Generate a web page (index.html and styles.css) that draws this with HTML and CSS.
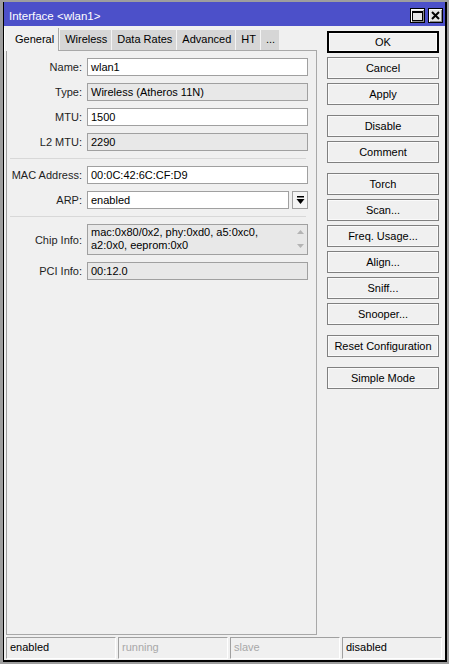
FILE: index.html
```html
<!DOCTYPE html>
<html lang="en">
<head>
    <meta charset="UTF-8">
    <title>Interface &lt;wlan1&gt;</title>
    <link rel="stylesheet" href="styles.css">
</head>
<body>
    <div class="window">
        <div class="titlebar">
            <span class="title">Interface &lt;wlan1&gt;</span>
            <div class="title-buttons">
                <span class="tbtn">
                    <svg width="11" height="10" viewBox="0 0 11 10"><rect x="0.5" y="0.5" width="10" height="9" fill="none" stroke="#000"/><rect x="0" y="0" width="11" height="2" fill="#000"/></svg>
                </span>
                <span class="tbtn">
                    <svg width="9" height="9" viewBox="0 0 9 9"><path d="M1 1 L8 8 M8 1 L1 8" stroke="#000" stroke-width="2"/></svg>
                </span>
            </div>
        </div>

        <div class="window-body">
            <div class="main">
                <div class="tabs">
                    <div class="tab active">General</div>
                    <div class="tab">Wireless</div>
                    <div class="tab">Data Rates</div>
                    <div class="tab">Advanced</div>
                    <div class="tab">HT</div>
                    <div class="tab">...</div>
                </div>
                <div class="panel">
                    <div class="row">
                        <label>Name:</label>
                        <div class="field">wlan1</div>
                    </div>
                    <div class="row">
                        <label>Type:</label>
                        <div class="field readonly">Wireless (Atheros 11N)</div>
                    </div>
                    <div class="row">
                        <label>MTU:</label>
                        <div class="field">1500</div>
                    </div>
                    <div class="row">
                        <label>L2 MTU:</label>
                        <div class="field readonly">2290</div>
                    </div>

                    <div class="separator"></div>

                    <div class="row">
                        <label>MAC Address:</label>
                        <div class="field">00:0C:42:6C:CF:D9</div>
                    </div>
                    <div class="row">
                        <label>ARP:</label>
                        <div class="field">enabled</div>
                        <span class="drop">
                            <svg width="9" height="9" viewBox="0 0 9 9"><rect x="1" y="0" width="7" height="1.5" fill="#000"/><path d="M0.5 3 L8.5 3 L4.5 8 Z" fill="#000"/></svg>
                        </span>
                    </div>

                    <div class="separator"></div>

                    <div class="row tall">
                        <label>Chip Info:</label>
                        <div class="field readonly multi">
                            <div>mac:0x80/0x2, phy:0xd0, a5:0xc0,<br>a2:0x0, eeprom:0x0</div>
                            <div class="scroll">
                                <svg width="7" height="4" viewBox="0 0 7 4"><path d="M0 4 L3.5 0 L7 4 Z" fill="#b4b4b4"/></svg>
                                <svg width="7" height="4" viewBox="0 0 7 4"><path d="M0 0 L7 0 L3.5 4 Z" fill="#b4b4b4"/></svg>
                            </div>
                        </div>
                    </div>
                    <div class="row">
                        <label>PCI Info:</label>
                        <div class="field readonly">00:12.0</div>
                    </div>
                </div>
            </div>

            <div class="actions">
                <button class="default">OK</button>
                <button>Cancel</button>
                <button>Apply</button>
                <button class="group">Disable</button>
                <button>Comment</button>
                <button class="group">Torch</button>
                <button>Scan...</button>
                <button>Freq. Usage...</button>
                <button>Align...</button>
                <button>Sniff...</button>
                <button>Snooper...</button>
                <button class="group">Reset Configuration</button>
                <button class="group">Simple Mode</button>
            </div>
        </div>

        <div class="statusbar">
            <div class="cell">enabled</div>
            <div class="cell off">running</div>
            <div class="cell off">slave</div>
            <div class="cell last">disabled</div>
        </div>
    </div>
</body>
</html>
```

FILE: styles.css
```css
body {
    margin: 0;
    padding: 2px 2px 2px 3px;
    height: 664px;
    box-sizing: border-box;
    background-color: #9e9e9e;
    font-family: "Liberation Sans", Arial, sans-serif;
    font-size: 11px;
    color: #000;
}

.window {
    height: 660px;
    box-sizing: border-box;
    display: flex;
    flex-direction: column;
    background-color: #f0f0f0;
    border-left: 1px solid #000;
    border-right: 2px solid #000;
    border-bottom: 2px solid #000;
}

/* title bar */
.titlebar {
    height: 24px;
    flex-shrink: 0;
    display: flex;
    justify-content: space-between;
    background-color: #4c50c9;
    color: #fff;
    font-size: 11.5px;
}

.title {
    padding: 7px 0 0 5px;
    line-height: 14px;
}

.title-buttons {
    display: flex;
    gap: 3px;
    padding: 6px 2px 0 0;
}

.tbtn {
    width: 13px;
    height: 13px;
    display: flex;
    align-items: center;
    justify-content: center;
    background-color: #e4e4e4;
    border: 1px solid #000;
    box-shadow: inset 1px 1px 0 #fff, inset -1px -1px 0 #8a8a8a;
}

/* body: tabs + panel on the left, buttons on the right */
.window-body {
    flex: 1;
    display: flex;
}

.main {
    width: 311px;
    margin-left: 2px;
    display: flex;
    flex-direction: column;
}

.tabs {
    display: flex;
    align-items: flex-end;
    height: 24px;
    box-sizing: border-box;
    padding-top: 1px;
    margin-left: -2px;
}

.tab {
    height: 20px;
    line-height: 19px;
    padding: 0 4px 0 5px;
    background-color: #d6d6d6;
    border-left: 1px solid #f4f4f4;
}

.tab.active {
    height: 23px;
    line-height: 22px;
    padding: 0 4px 0 10px;
    background-color: #f0f0f0;
    border-left: 1px solid #fff;
    border-right: 1px solid #a8a8a8;
    margin-bottom: -1px;
    position: relative;
}

.panel {
    height: 585px;
    box-sizing: border-box;
    border: 1px solid #a8a8a8;
    border-left-color: #a0a0a0;
    padding: 7px 8px 0 0;
}

.row {
    display: flex;
    align-items: center;
    height: 18px;
    margin-bottom: 7px;
}

.row label {
    width: 75px;
    margin-right: 5px;
    text-align: right;
    color: #1e1e1e;
}

.field {
    flex: 1;
    height: 18px;
    box-sizing: border-box;
    padding-left: 3px;
    line-height: 16px;
    background-color: #fff;
    border: 1px solid #a0a0a0;
    white-space: nowrap;
    overflow: hidden;
}

.field.readonly {
    background-color: #e8e8e8;
}

.drop {
    width: 16px;
    height: 18px;
    box-sizing: border-box;
    margin-left: 3px;
    display: flex;
    align-items: center;
    justify-content: center;
    background-color: #f4f4f4;
    border: 1px solid #a0a0a0;
}

.separator {
    height: 1px;
    margin: 2px 2px 7px 3px;
    background-color: #d8d8d8;
}

.row.tall {
    height: 31px;
    margin-bottom: 7px;
}

.field.multi {
    height: 31px;
    line-height: 13px;
    padding-top: 1px;
    display: flex;
    justify-content: space-between;
}

.scroll {
    width: 14px;
    display: flex;
    flex-direction: column;
    justify-content: space-between;
    align-items: center;
    padding: 4px 0 6px;
}

/* action buttons */
.actions {
    width: 112px;
    margin: 5px 0 0 10px;
    display: flex;
    flex-direction: column;
    gap: 4px;
}

.actions button {
    height: 22px;
    padding: 0;
    background-color: #f0f0f0;
    border: 1px solid #808080;
    box-shadow: inset 0 0 0 1px #fafafa;
    font-family: "Liberation Sans", Arial, sans-serif;
    font-size: 11px;
    color: #000;
}

.actions button.default {
    border: 2px solid #000;
}

.actions button.group {
    margin-top: 6px;
}

/* status bar */
.statusbar {
    height: 22px;
    margin: 2px 0 1px 2px;
    display: flex;
    gap: 2px;
}

.cell {
    width: 110px;
    box-sizing: border-box;
    padding-left: 3px;
    line-height: 18px;
    border: 1px solid #fff;
    border-top-color: #a0a0a0;
    border-left-color: #a0a0a0;
}

.cell.off {
    color: #a8a8a8;
}

.cell.last {
    width: 100px;
}
```
